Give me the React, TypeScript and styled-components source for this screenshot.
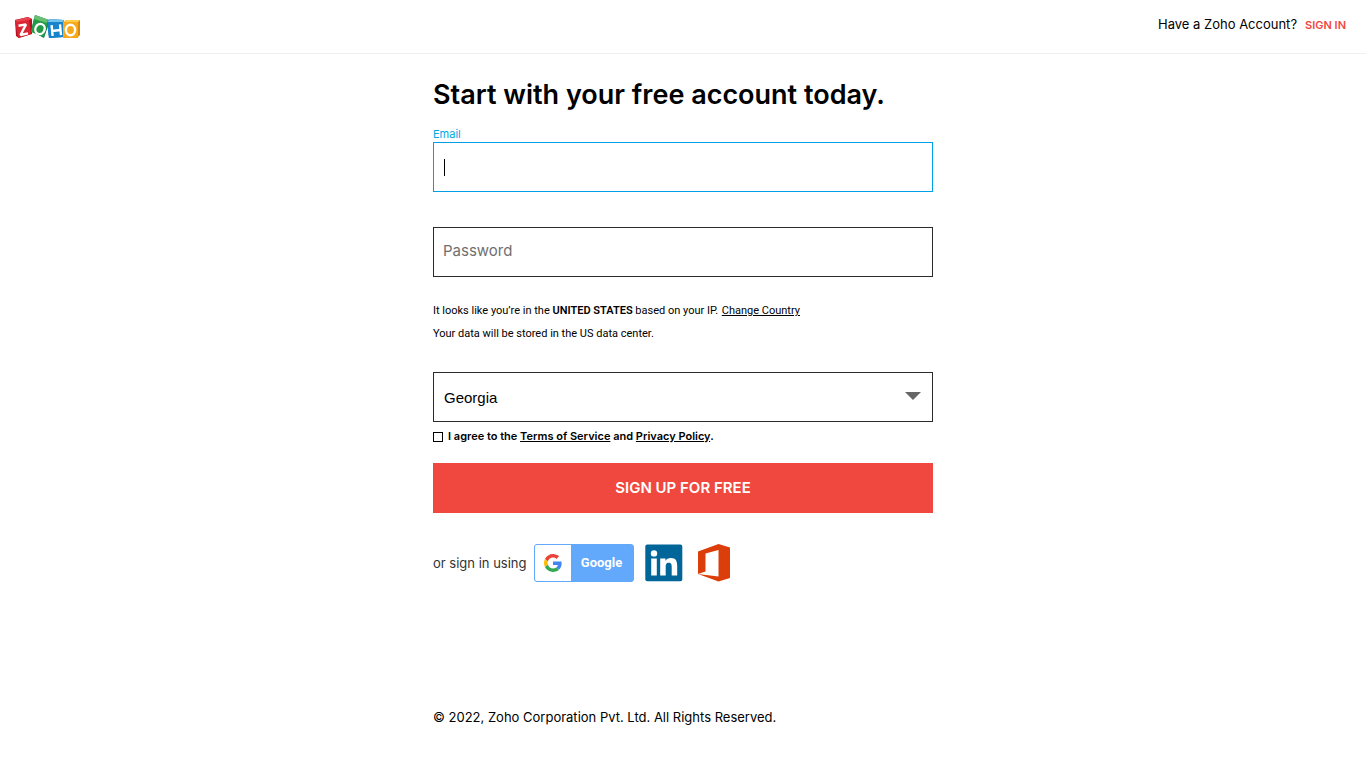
import React, { useState } from "react";
import styled, { createGlobalStyle } from "styled-components";

const GlobalStyle = createGlobalStyle`
  * { box-sizing: border-box; }
  body {
    margin: 0;
    background: #fff;
    color: #000;
    font-family: Inter, "Liberation Sans", sans-serif;
  }
`;

const Header = styled.header`
  display: flex;
  justify-content: space-between;
  align-items: flex-start;
  height: 54px;
  padding: 14px 20px 0 14px;
  border-bottom: 1px solid #f0f0f0;
`;

const LogoLink = styled.a`
  display: block;
  line-height: 0;
`;

const AccountNote = styled.div`
  display: flex;
  align-items: baseline;
  gap: 8px;
  font-size: 13px;
  line-height: 20px;
`;

const SignInLink = styled.a`
  color: #f0483e;
  font-size: 11px;
  font-weight: 600;
  text-decoration: none;
`;

const Main = styled.main`
  width: 100%;
  max-width: 500px;
  margin: 0 auto;
  padding-top: 22px;
`;

const Title = styled.h1`
  margin: 0;
  font-size: 27px;
  font-weight: 600;
  line-height: 38px;
`;

const Form = styled.form`
  display: flex;
  flex-direction: column;
`;

const FieldLabel = styled.label`
  margin-top: 12px;
  color: #00a9e5;
  font-size: 11px;
  line-height: 16px;
`;

const Field = styled.div`
  position: relative;
`;

const TextInput = styled.input<{ $active?: boolean }>`
  display: block;
  width: 100%;
  height: 50px;
  padding: 0 9px 3px;
  border: 1px solid ${(p) => (p.$active ? "#00a0e9" : "#2b2b2b")};
  border-radius: 0;
  outline: none;
  background: #fff;
  caret-color: ${(p) => (p.$active ? "transparent" : "auto")};
  font: 400 15px Inter, sans-serif;
  &::placeholder {
    color: #6f6f6f;
    opacity: 1;
  }
`;

const Caret = styled.span`
  position: absolute;
  top: 17px;
  left: 11px;
  width: 1px;
  height: 17px;
  background: #000;
  pointer-events: none;
`;

const PasswordField = styled(Field)`
  margin-top: 35px;
`;

const Notes = styled.div`
  margin-top: 22px;
  font-family: Roboto, sans-serif;
  font-size: 11px;
  line-height: 23px;
  p { margin: 0; }
  strong { font-weight: 600; }
  a { color: inherit; margin-left: 1px; text-underline-offset: 1px; }
`;

const SelectField = styled(Field)`
  margin-top: 27px;
`;

const StateSelect = styled.select`
  display: block;
  width: 100%;
  height: 50px;
  padding: 0 40px 0 10px;
  border: 1px solid #2b2b2b;
  border-radius: 0;
  outline: none;
  appearance: none;
  background: #fff;
  color: #000;
  font: 400 15px "Liberation Sans", Arial, sans-serif;
`;

const Arrow = styled.svg`
  position: absolute;
  top: 20px;
  right: 12px;
  pointer-events: none;
`;

const Agreement = styled.div`
  display: flex;
  align-items: center;
  gap: 5px;
  margin-top: 6px;
  font-size: 11px;
  font-weight: 600;
  line-height: 17px;
  a { color: inherit; text-underline-offset: 1px; }
`;

const Checkbox = styled.input`
  appearance: none;
  width: 10px;
  height: 10px;
  margin: 1px 0 0;
  border: 1px solid #000;
  background: #fff;
  &:checked { background: #f0483e; }
`;

const SubmitButton = styled.button`
  height: 50px;
  margin-top: 18px;
  padding: 0 0 2px;
  border: 0;
  background: #f0483e;
  color: #fff;
  font: 600 15px Inter, sans-serif;
  cursor: pointer;
`;

const SocialRow = styled.div`
  display: flex;
  align-items: center;
  margin-top: 31px;
  height: 38px;
  color: #333;
  font-size: 13px;
`;

const SocialButton = styled.button<{ $gap: number }>`
  margin: 0 0 0 ${(p) => p.$gap}px;
  padding: 0;
  border: 0;
  background: none;
  line-height: 0;
  cursor: pointer;
`;

const GoogleButton = styled.button`
  display: flex;
  align-items: stretch;
  width: 100px;
  height: 38px;
  margin: 0 0 0 7px;
  padding: 0;
  overflow: hidden;
  border: 1px solid #62a8fb;
  border-radius: 3px;
  background: #62a8fb;
  color: #fff;
  font: 700 13px/36px Roboto, sans-serif;
  cursor: pointer;
`;

const GoogleMark = styled.span`
  display: flex;
  align-items: center;
  justify-content: center;
  width: 36px;
  background: #fff;
`;

const GoogleText = styled.span`
  flex: 1;
  text-align: center;
`;

const Footer = styled.footer`
  padding: 125px 0 20px;
  font-size: 13px;
  line-height: 20px;
`;

function ZohoLogo() {
  return (
    <svg width="67" height="26" viewBox="0 0 67 26" fill="none" role="img" aria-label="Zoho">
      <path d="M1 6L14 3L18 5L18 20L5 24L2 22Z" fill="#b01222" />
      <path d="M1 7L15 5L17 20L4 24Z" fill="#da2532" />
      <path d="M1 6L14 3L18 5L15 6L3 8Z" fill="#e5444d" />
      <path d="M21 1L35 6L35 9L30 24L17 17Z" fill="#087a38" />
      <path d="M20 4L34 8L30 23L17 18Z" fill="#239a45" />
      <path d="M21 1L35 6L33 9L20 5Z" fill="#67bf72" />
      <path d="M33 7L36 5L50 6L50 23L35 24Z" fill="#0870b4" />
      <path d="M33 8L49 8L49 23L35 24Z" fill="#1684cb" />
      <path d="M33 8L36 5L50 6L49 8Z" fill="#75c3eb" />
      <path d="M49 9L52 6H66V21L63 24H49Z" fill="#d98a08" />
      <path d="M49 8H64V24H49Z" fill="#f7a91b" />
      <path d="M49 8L52 6H66L64 8Z" fill="#ffcc47" />
      <g stroke="#fff" strokeWidth="2.4">
        <path d="M4.5 11.8L12 10.4L6.5 21L14 19.4" strokeLinejoin="bevel" />
        <ellipse cx="26" cy="15" rx="4.6" ry="5.2" transform="rotate(24 26 15)" />
        <path d="M37.6 11.2L38.6 22M46 10.4L47 21.2M38 17L46.6 16" />
        <ellipse cx="56.5" cy="16" rx="4.6" ry="5.2" />
      </g>
    </svg>
  );
}

function GoogleIcon() {
  return (
    <svg width="18" height="18" viewBox="0 0 48 48" aria-hidden="true">
      <path fill="#EA4335" d="M24 9.5c3.54 0 6.71 1.22 9.21 3.6l6.85-6.85C35.9 2.38 30.47 0 24 0 14.62 0 6.51 5.38 2.56 13.22l7.98 6.19C12.43 13.72 17.74 9.5 24 9.5z" />
      <path fill="#4285F4" d="M46.98 24.55c0-1.57-.15-3.09-.38-4.55H24v9.02h12.94c-.58 2.96-2.26 5.48-4.78 7.18l7.73 6c4.51-4.18 7.09-10.36 7.09-17.65z" />
      <path fill="#FBBC05" d="M10.53 28.59A14.5 14.5 0 0 1 9.77 24c0-1.6.27-3.14.76-4.59l-7.98-6.19A24 24 0 0 0 0 24c0 3.88.92 7.54 2.56 10.78l7.97-6.19z" />
      <path fill="#34A853" d="M24 48c6.48 0 11.93-2.13 15.89-5.81l-7.73-6c-2.15 1.45-4.92 2.3-8.16 2.3-6.26 0-11.57-4.22-13.47-9.91l-7.98 6.19C6.51 42.62 14.62 48 24 48z" />
    </svg>
  );
}

function LinkedInIcon() {
  return (
    <svg width="38" height="38" viewBox="0 0 38 38" aria-hidden="true">
      <rect x="0.3" y="0.5" width="37" height="36.8" rx="2" fill="#006699" />
      <circle cx="9" cy="9.4" r="3.2" fill="#fff" />
      <path fill="#fff" d="M6.2 14.5h5.6v17H6.2zM15.2 14.5h5.3v2.4c.8-1.5 2.7-2.8 5.3-2.8 5.4 0 6.4 3.4 6.4 8.2v9.2h-5.5v-8.3c0-2 0-4.5-2.8-4.5s-3.2 2.1-3.2 4.3v8.5h-5.5z" />
    </svg>
  );
}

function OfficeIcon() {
  return (
    <svg width="32" height="38" viewBox="0 0 32 38" aria-hidden="true">
      <path fill="#dc3e0b" fillRule="evenodd" d="M0 7.5L20.5 0L32 3.5V34L20.5 37.5L0 30V7.5ZM7.5 9.5V27.5L0 30L20.5 32.5V6Z" />
    </svg>
  );
}

export default function App() {
  const [email, setEmail] = useState("");

  return (
    <>
      <GlobalStyle />
      <Header>
        <LogoLink href="#"><ZohoLogo /></LogoLink>
        <AccountNote>
          <span>Have a Zoho Account?</span>
          <SignInLink href="#">SIGN IN</SignInLink>
        </AccountNote>
      </Header>
      <Main>
        <Title>Start with your free account today.</Title>
        <Form onSubmit={(e) => e.preventDefault()}>
          <FieldLabel htmlFor="email">Email</FieldLabel>
          <Field>
            <TextInput
              id="email"
              type="email"
              $active={email === ""}
              value={email}
              onChange={(e) => setEmail(e.target.value)}
            />
            {email === "" && <Caret />}
          </Field>
          <PasswordField>
            <TextInput type="password" placeholder="Password" aria-label="Password" />
          </PasswordField>
          <Notes>
            <p>
              It looks like you’re in the <strong>UNITED STATES</strong> based on your IP.{" "}
              <a href="#">Change Country</a>
            </p>
            <p>Your data will be stored in the US data center.</p>
          </Notes>
          <SelectField>
            <StateSelect aria-label="State" defaultValue="Georgia">
              <option>Georgia</option>
            </StateSelect>
            <Arrow width="16" height="8" viewBox="0 0 16 8" aria-hidden="true">
              <path d="M0 0H16L8 8Z" fill="#666" />
            </Arrow>
          </SelectField>
          <Agreement>
            <Checkbox id="agree" type="checkbox" />
            <label htmlFor="agree">
              I agree to the <a href="#">Terms of Service</a> and <a href="#">Privacy Policy</a>.
            </label>
          </Agreement>
          <SubmitButton type="submit">SIGN UP FOR FREE</SubmitButton>
        </Form>
        <SocialRow>
          <span>or sign in using</span>
          <GoogleButton type="button">
            <GoogleMark><GoogleIcon /></GoogleMark>
            <GoogleText>Google</GoogleText>
          </GoogleButton>
          <SocialButton type="button" $gap={11} aria-label="LinkedIn"><LinkedInIcon /></SocialButton>
          <SocialButton type="button" $gap={15} aria-label="Office 365"><OfficeIcon /></SocialButton>
        </SocialRow>
        <Footer>© 2022, Zoho Corporation Pvt. Ltd. All Rights Reserved.</Footer>
      </Main>
    </>
  );
}
